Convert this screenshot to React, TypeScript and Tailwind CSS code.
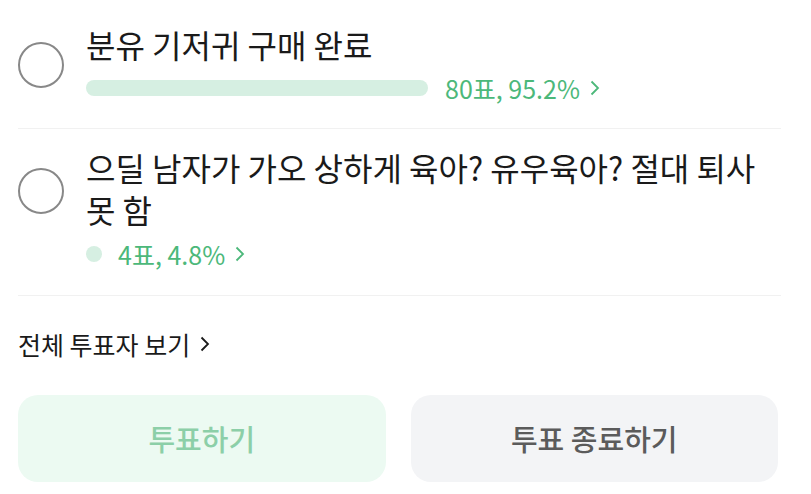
const font = '"Noto Sans CJK KR", "Noto Sans", sans-serif';

function Radio({ className }: { className?: string }) {
  return (
    <div
      className={`h-[46px] w-[46px] shrink-0 rounded-full border-[2.5px] border-[#888888] ${className ?? ''}`}
    />
  );
}

function Chevron() {
  return (
    <svg width="10" height="16" viewBox="0 0 10 16" className="ml-[10px] inline-block">
      <path d="M1.5 1.5 L8 8 L1.5 14.5" fill="none" stroke="currentColor" strokeWidth="1.8" />
    </svg>
  );
}

export default function App() {
  return (
    <div className="min-h-screen bg-white" style={{ fontFamily: font }}>
      <div className="w-[781px] pl-[18px]">
        {/* option 1 */}
        <div className="flex items-start gap-[22px] border-b border-[#f1f1f1] pb-[25px] pt-[23px]">
          <Radio className="mt-[19px]" />
          <div className="flex-1">
            <p className="text-[32px] leading-[42px] text-[#1a1a1a]">분유 기저귀 구매 완료</p>
            <div className="mt-[8px] flex items-center gap-[17px]">
              <div className="h-[16px] w-[342px] rounded-full bg-[#d6efe2]" />
              <span className="flex items-center text-[25px] leading-[30px] text-[#4cb87a]">
                80표, 95.2%
                <Chevron />
              </span>
            </div>
          </div>
        </div>

        {/* option 2 */}
        <div className="flex items-start gap-[22px] border-b border-[#f1f1f1] pb-[26px] pt-[17px]">
          <Radio className="mt-[22px]" />
          <div className="flex-1">
            <p className="text-[32px] leading-[42px] text-[#1a1a1a]">
              으딜 남자가 가오 상하게 육아? 유우육아? 절대 퇴사 못 함
            </p>
            <div className="mt-[9px] flex items-center gap-[16px]">
              <div className="h-[16px] w-[16px] rounded-full bg-[#d6efe2]" />
              <span className="flex items-center text-[25px] leading-[30px] text-[#4cb87a]">
                4표, 4.8%
                <Chevron />
              </span>
            </div>
          </div>
        </div>

        <div className="flex items-center pt-[33px] text-[25px] leading-[30px] text-[#1a1a1a]">
          전체 투표자 보기
          <Chevron />
        </div>

        <div className="mt-[36px] grid grid-cols-2 gap-[25px] pr-[3px]">
          <button className="h-[87px] rounded-[20px] bg-[#ecfaf2] text-[29px] font-medium text-[#8ccfa8]">
            투표하기
          </button>
          <button className="h-[87px] rounded-[20px] bg-[#f3f4f6] text-[29px] font-medium text-[#5b5b5b]">
            투표 종료하기
          </button>
        </div>
      </div>
    </div>
  );
}
